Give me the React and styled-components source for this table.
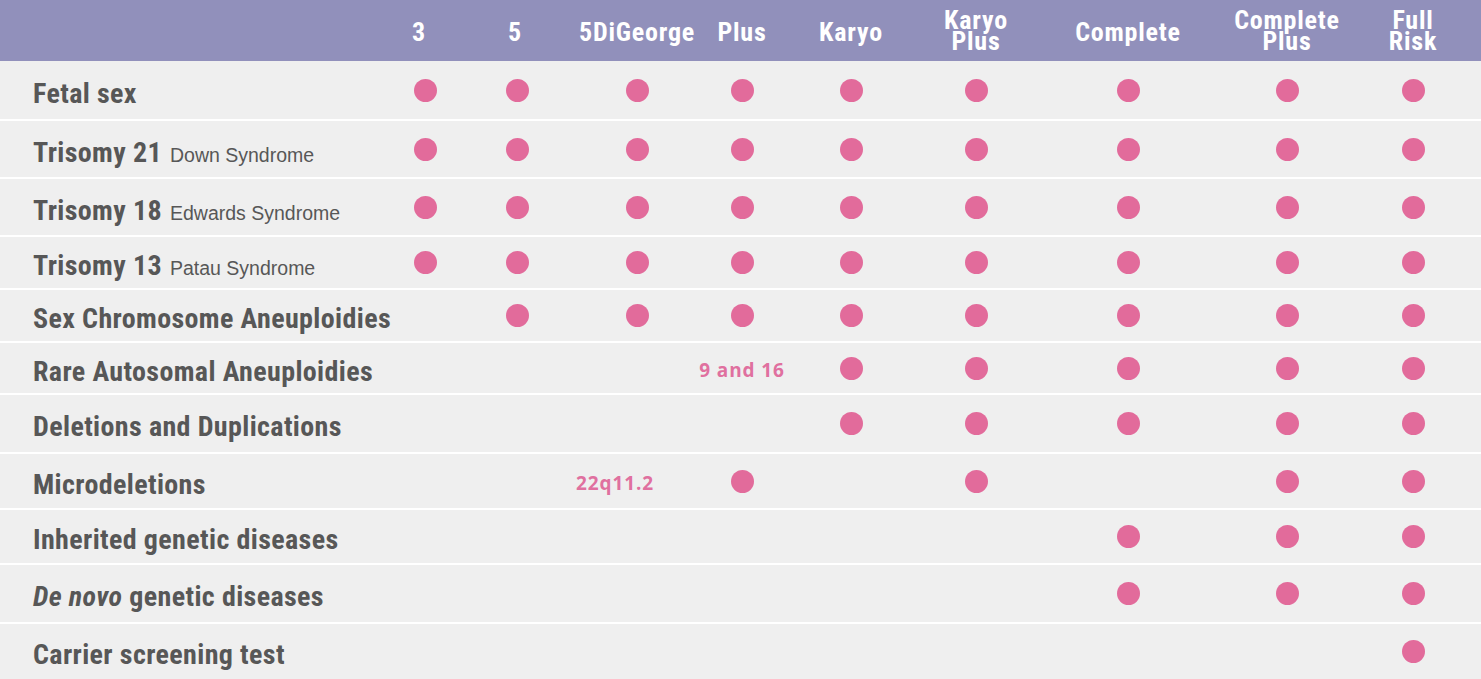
import React from "react";
import styled, { createGlobalStyle } from "styled-components";

const GlobalStyle = createGlobalStyle`
  html, body { margin: 0; padding: 0; background: #efefef; }
  body { font-family: Roboto, "Liberation Sans", Arial, sans-serif; }
`;

const COLS = "390px 70px 114px 126px 84px 134px 116px 188px 130px 122px 1fr";

const Table = styled.div`
  width: 1481px;
  height: 679px;
  overflow: hidden;
  background: #efefef;
  display: flex;
  flex-direction: column;
`;

const HeaderRow = styled.div`
  display: grid;
  grid-template-columns: ${COLS};
  height: 61px;
  flex: none;
  background: #9190bb;
  align-items: center;
`;

const HeaderCell = styled.div`
  justify-self: center;
  white-space: nowrap;
  font-family: Roboto, "Liberation Sans", Arial, sans-serif;
  font-stretch: 85%;
  font-weight: 700;
  font-size: 26px;
  letter-spacing: 0.8px;
  line-height: ${(p) => (p.$twoLine ? "21px" : "30px")};
  color: #ffffff;
  text-align: center;
  padding-top: ${(p) => (p.$twoLine ? "1px" : "2px")};
  margin-left: ${(p) => p.$shift || 0}px;
`;

const Row = styled.div`
  display: grid;
  grid-template-columns: ${COLS};
  height: ${(p) => p.$h}px;
  flex: none;
  align-items: center;
  border-top: ${(p) => (p.$first ? "none" : "2px solid #ffffff")};
  box-sizing: border-box;
`;

const Label = styled.div`
  padding-left: 33px;
  padding-top: 6px;
  color: #575757;
  white-space: nowrap;
`;

const Main = styled.span`
  font-family: Roboto, "Liberation Sans", Arial, sans-serif;
  font-stretch: 75%;
  font-weight: 700;
  font-size: 28px;
  letter-spacing: 0.37px;
  font-style: ${(p) => (p.$italic ? "italic" : "normal")};
`;

const Sub = styled.span`
  font-family: "Liberation Sans", Arial, sans-serif;
  font-weight: 400;
  font-size: 19.5px;
  margin-left: 8px;
`;

const Cell = styled.div`
  display: flex;
  justify-content: center;
  align-items: center;
`;

const Dot = styled.span`
  display: block;
  width: 23px;
  height: 23px;
  border-radius: 50%;
  background: #e26b9b;
`;

const Note = styled.span`
  font-family: "Open Sans", "Liberation Sans", Arial, sans-serif;
  font-weight: 700;
  font-size: 19px;
  letter-spacing: 0.9px;
  color: #e0709f;
  white-space: nowrap;
  margin-right: ${(p) => p.$shiftLeft || 0}px;
  padding-top: 3px;
`;

const headers = [
  { t: ["3"], shift: -12 },
  { t: ["5"], shift: -4 },
  { t: ["5DiGeorge"] },
  { t: ["Plus"] },
  { t: ["Karyo"] },
  { t: ["Karyo", "Plus"] },
  { t: ["Complete"] },
  { t: ["Complete", "Plus"] },
  { t: ["Full", "Risk"] },
];

// 1 = dot, string = note, 0 = empty
const rows = [
  { h: 58, main: "Fetal sex", v: [1, 1, 1, 1, 1, 1, 1, 1, 1] },
  { h: 58, main: "Trisomy 21", sub: "Down Syndrome", v: [1, 1, 1, 1, 1, 1, 1, 1, 1] },
  { h: 58, main: "Trisomy 18", sub: "Edwards Syndrome", v: [1, 1, 1, 1, 1, 1, 1, 1, 1] },
  { h: 53, main: "Trisomy 13", sub: "Patau Syndrome", v: [1, 1, 1, 1, 1, 1, 1, 1, 1] },
  { h: 53, main: "Sex Chromosome Aneuploidies", v: [0, 1, 1, 1, 1, 1, 1, 1, 1] },
  { h: 52, main: "Rare Autosomal Aneuploidies", v: [0, 0, 0, "9 and 16", 1, 1, 1, 1, 1] },
  { h: 59, main: "Deletions and Duplications", v: [0, 0, 0, 0, 1, 1, 1, 1, 1] },
  { h: 56, main: "Microdeletions", v: [0, 0, "22q11.2", 1, 0, 1, 0, 1, 1] },
  { h: 55, main: "Inherited genetic diseases", v: [0, 0, 0, 0, 0, 0, 1, 1, 1] },
  { h: 59, italic: "De novo", main: " genetic diseases", v: [0, 0, 0, 0, 0, 0, 1, 1, 1] },
  { h: 57, main: "Carrier screening test", v: [0, 0, 0, 0, 0, 0, 0, 0, 1] },
];

export default function App() {
  return (
    <>
      <GlobalStyle />
      <Table>
        <HeaderRow>
          <div />
          {headers.map((h, i) => (
            <HeaderCell key={i} $twoLine={h.t.length > 1} $shift={h.shift}>
              {h.t.map((line, j) => (
                <div key={j}>{line}</div>
              ))}
            </HeaderCell>
          ))}
          <div />
        </HeaderRow>
        {rows.map((r, i) => (
          <Row key={i} $h={r.h} $first={i === 0}>
            <Label>
              {r.italic && <Main $italic>{r.italic}</Main>}
              <Main>{r.main}</Main>
              {r.sub && <Sub>{r.sub}</Sub>}
            </Label>
            {r.v.map((c, j) => (
              <Cell key={j}>
                {c === 1 ? <Dot /> : c ? <Note $shiftLeft={c === "22q11.2" ? 44 : 0}>{c}</Note> : null}
              </Cell>
            ))}
            <div />
          </Row>
        ))}
      </Table>
    </>
  );
}
